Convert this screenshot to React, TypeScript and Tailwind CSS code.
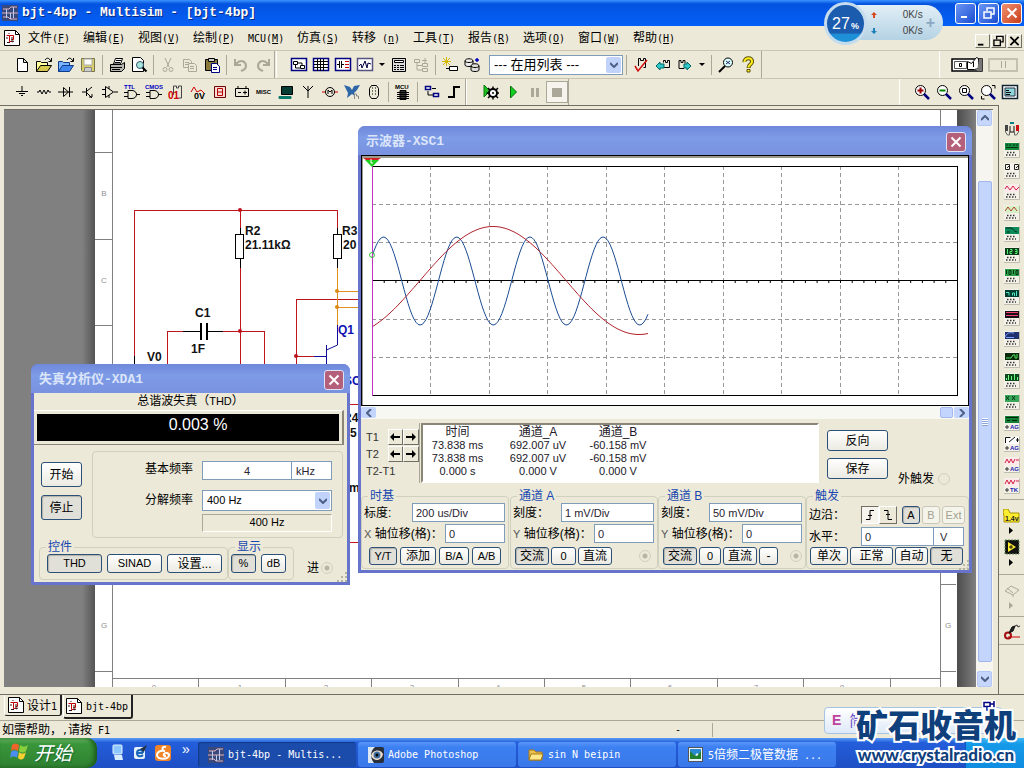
import { ReactNode, useState } from 'react';
import clsx from 'clsx';

const SANS = "font-['Liberation_Sans','Noto_Sans_CJK_SC',sans-serif]";

/* ---------- text helpers ---------- */

// half width latin next to full width han characters
function Song({ text }: { text: string }) {
  return (
    <>
      {text.split(/([\u4e00-\u9fff，]+)/).map((part, i) =>
        /[\u4e00-\u9fff]/.test(part) ? (
          <span key={i} className="font-['Noto_Sans_CJK_SC',sans-serif] text-[12px]">
            {part}
          </span>
        ) : (
          <span
            key={i}
            className="font-['DejaVu_Sans_Mono','Noto_Sans_CJK_SC',monospace] text-[10px] whitespace-pre"
          >
            {part}
          </span>
        ),
      )}
    </>
  );
}

/* ---------- icons ---------- */

type PProps = { d: string; s?: string; f?: string; w?: number };
const P = ({ d, s = '#000', f = 'none', w = 1 }: PProps) => (
  <path d={d} stroke={s} fill={f} strokeWidth={w} />
);

function T({ x, y, t, c = '#000', size = 6 }: { x: number; y: number; t: string; c?: string; size?: number }) {
  return (
    <text x={x} y={y} fill={c} fontSize={size} fontWeight="bold" fontFamily="Liberation Sans, sans-serif">
      {t}
    </text>
  );
}

const lens = (
  <>
    <circle cx="6.5" cy="6.5" r="5" fill="#fff" stroke="#000" />
    <P d="M10 10l5 5" s="#000080" w={2.5} />
  </>
);

const icons: Record<string, ReactNode> = {
  new: <P d="M3.5 1.5h6l4 4v9h-10zM9.5 1.5v4h4" f="#fff" />,
  open: (
    <>
      <P d="M.5 14.5v-10h4l1 1h6v3" f="#ffff9c" />
      <P d="M.5 14.5l4-6h11l-4 6z" f="#d6c84e" />
      <P d="M9 3c2-3 4-2 6 1M15.5 1v3.5h-3" />
    </>
  ),
  openBlue: (
    <>
      <P d="M.5 14.5v-10h4l1 1h6v3" s="#103a8a" f="#7db4ff" />
      <P d="M.5 14.5l4-6h11l-4 6z" s="#103a8a" f="#3f86ee" />
      <P d="M9 3c2-3 4-2 6 1M15.5 1v3.5h-3" />
    </>
  ),
  save: (
    <>
      <P d="M1.5 1.5h13v13h-12l-1-1z" s="#77744c" f="#d8cf6a" />
      <P d="M4 2h8v6h-8z" s="#aaa" f="#fff" />
      <P d="M4.5 10.5h7v4h-7z" s="#888" f="#ccc" />
    </>
  ),
  print: (
    <>
      <P d="M4.5 7l2-5.5h7l-2 5.5z" f="#fff" />
      <P d="M1.5 7.5h11l3-2v6l-3 3h-11z" f="#b8b8b0" />
      <P d="M1 10.5h12M3 12.5h8M7 3.5h5M6 5.5h5" />
    </>
  ),
  preview: (
    <>
      <P d="M1.5 .5h8l3 3v11h-11z" f="#fff" />
      <circle cx="9" cy="8" r="3.5" fill="#a8e6e0" stroke="#356" />
      <P d="M11.5 10.5l4 4" w={2} />
    </>
  ),
  cut: (
    <>
      <P d="M5 1l4 9M11 1l-4 9" s="#aca899" />
      <circle cx="5" cy="12.5" r="2" fill="none" stroke="#aca899" />
      <circle cx="11" cy="12.5" r="2" fill="none" stroke="#aca899" />
    </>
  ),
  copy: (
    <>
      <P d="M1.5 2.5h6l2 2v6h-8zM3 5.5h4M3 7.5h4" s="#aca899" />
      <P d="M6.5 6.5h6l2 2v6h-8zM8 9.5h4M8 11.5h4" s="#aca899" f="#ece9d8" />
    </>
  ),
  paste: (
    <>
      <P d="M1.5 2.5h12v11h-12z" f="#8a7a3c" />
      <P d="M4.5 1.5h6v3h-6z" f="#ccc" />
      <P d="M7.5 6.5h5l3 3v6h-8zM9 10.5h4M9 12.5h4" s="#000080" f="#fff" />
    </>
  ),
  undo: <P d="M2 2v6h6M3 7c5-6 10-2 10 2s-3 4-5 5" s="#aca899" w={2} />,
  redo: <P d="M14 2v6h-6M13 7c-5-6-10-2-10 2s3 4 5 5" s="#aca899" w={2} />,
  schematic: (
    <>
      <P d="M.5 1.5h15v12h-15z" s="#000080" f="#fff" w={1.5} />
      <P d="M2.5 4.5h4v3h-4zM9.5 8.5h4v3h-4zM7 6h4v2M4.5 8v3h5" />
    </>
  ),
  grid: (
    <>
      <P d="M.5 1.5h15v12h-15z" s="#000080" f="#fff" w={1.5} />
      <P d="M1 4.5h14M1 7.5h14M1 10.5h14M4.5 2v12M7.5 2v12M10.5 2v12" />
    </>
  ),
  spread: (
    <>
      <P d="M.5 1.5h15v12h-15z" s="#000080" f="#fff" w={1.5} />
      <P d="M2 7.5h2M4.5 4v7M6.5 4v7M7 7.5h2" />
      <P d="M10 4.5h4M10 7.5h4M10 10.5h4" s="#c00" />
    </>
  ),
  graph: (
    <>
      <P d="M.5 1.5h15v12h-15z" s="#555580" f="#fff" w={1.5} />
      <P d="M2 9l2-2 1 4 3-7 2 7 1-5 3 1" s="#000040" />
    </>
  ),
  calc: (
    <>
      <P d="M1.5 1.5h13v13h-13z" f="#ddd" />
      <P d="M3.5 3.5h9v2h-9z" f="#fff" />
      <P d="M3 8.5h2M6 8.5h2M9 8.5h4M3 10.5h2M6 10.5h2M9 10.5h4M3 12.5h2M6 12.5h2M9 12.5h4" />
    </>
  ),
  tree: <P d="M1.5 2.5h5v3h-5zM9.5 6.5h5v3h-5zM9.5 11.5h5v3h-5zM4 6v7h5M4 8.5h5M9 3.5h5M12 1v5" s="#aca899" />,
  wizard: (
    <>
      <P d="M4.5 0v9M0 4.5h9M1 1l7 7M8 1l-7 7" s="#d6b800" />
      <P d="M7.5 9.5h8v4h-8z" f="#fff" />
      <P d="M4 11.5h3" />
    </>
  ),
  database: (
    <>
      <P d="M1 4c0-3 8-3 8 0v4c0 2-8 2-8 0zM1 4c0 2 8 2 8 0" f="#eee" />
      <P d="M7 9c0-3 8-3 8 0v4c0 2-8 2-8 0zM7 9c0 2 8 2 8 0" f="#ddd" />
      <P d="M11 3h4M13 1v4" s="#0000c0" w={1.5} />
    </>
  ),
  erc: (
    <>
      <P d="M5.5 9v-7.5h2v2h3v-2h2v9h-2" />
      <P d="M2 9l3 5L14 3" s="#d01010" w={1.5} />
    </>
  ),
  back: (
    <>
      <P d="M8.5 5.5v-2h2v2h2v-2h2v7h-6" />
      <P d="M1 9l4-4v2h4v4h-4v2z" s="#066" f="#30c8c8" />
    </>
  ),
  forward: (
    <>
      <P d="M7 11.5h-5v-8h2v2h2v-2h2v3" />
      <P d="M14 9l-4-4v2h-3v4h3v2z" s="#066" f="#30c8c8" />
    </>
  ),
  find: (
    <>
      <circle cx="10" cy="5.5" r="4.5" fill="#dff" stroke="#000" />
      <P d="M7 9l-6 6" w={2} />
      <P d="M8 4l4 3M12 4l-4 3" s="#226" />
    </>
  ),
  help: (
    <>
      <P d="M4.500 5C4 0 13 0 12 5c0 2-3.500 2.500-3.500 6" s="#5c5200" w={4} />
      <P d="M4.500 5C4 0 13 0 12 5c0 2-3.500 2.500-3.500 5.500" s="#ffee20" w={2} />
      <P d="M7 12.500h3v2.500h-3z" s="#5c5200" f="#ffee20" />
    </>
  ),
  source: <P d="M8 2v5M2 7.5h12M5 9.5h6M7 11.5h2" />,
  resistor: <P d="M1 8h2l1-2 2 4 2-4 2 4 2-4 1 2h2" />,
  diode: <P d="M0 8h15M5.5 3.5v9l5-4.5zM11.5 3v10" />,
  transistor: <P d="M2 8h4M6.5 4v8M7 7l5-4M7 9l5 5M9 13h3v-3" />,
  opamp: <P d="M3.5 2.5v11l8-5.5zM0 5.5h3M0 10.5h3M12 8h4M7 2v3M7 11v3" />,
  ttl: (
    <>
      <T x={0} y={5} t="TTL" c="#0000c0" />
      <P d="M4 6.5h4c6 0 6 8 0 8h-4zM0 8.5h4M0 12.5h4M12 10.5h4" />
    </>
  ),
  cmos: (
    <>
      <T x={-1} y={5} t="CMOS" c="#0000c0" />
      <P d="M4 6.5h4c6 0 6 8 0 8h-4zM0 8.5h4M0 12.5h4M12 10.5h4" />
    </>
  ),
  digital: (
    <>
      <P d="M5.5 11v-9h3v2h2v-2h3v12h-3" s="#444" />
      <T x={0} y={15} t="01" c="#d00000" size={10} />
    </>
  ),
  mixed: (
    <>
      <P d="M1 8l3-5 3 5 4-2 3 3" s="#d00000" />
      <T x={4} y={15} t="0V" size={9} />
    </>
  ),
  display: (
    <>
      <P d="M2.5 2.5h11v11h-11z" s="#700" f="#f6dcd6" />
      <P d="M5.5 4.5h5v7h-5zM6 8h4" s="#b00" />
    </>
  ),
  power: <P d="M1.5 4.5h13v8h-13zM4 2v2M12 2v2M4 8.5h3M9 8.5h4M11 6.5v4" />,
  misc: <T x={0} y={10} t="MISC" size={6} />,
  pc: (
    <>
      <P d="M3.5 2.5h11v8h-11z" f="#063c34" />
      <P d="M1 12.5h12v2h-12z" s="#0a7a6a" f="#0a7a6a" />
    </>
  ),
  antenna: <P d="M3 2l5 5 5-5M8 2v12" />,
  motor: (
    <>
      <circle cx="8" cy="8" r="4.5" fill="none" stroke="#000" />
      <P d="M0 8h3M13 8h3" s="#c00" />
      <P d="M6 10v-4l2 2 2-2v4" />
    </>
  ),
  bird: (
    <>
      <P d="M0 1l6 2 2 3 2-4 6-1-3 5-3 3 1 3-3-2-5 4 1-5-2-4z" s="none" f="#2d66a8" />
      <P d="M10.500 15v-5h2v2h2v3" s="#888" />
    </>
  ),
  connector: <P d="M5.5 1.5h5l2 3v7l-2 3h-5l-2-3v-7zM6 4h1M9 4h1M6 7h1M9 7h1M6 10h1M9 10h1" />,
  mcu: (
    <>
      <T x={0} y={5} t="MCU" size={6} />
      <P d="M5 6.5h6v9h-6z" f="#333" />
      <P d="M2 8.5h12M2 10.5h12M2 12.5h12M2 14.5h12" />
    </>
  ),
  hier: (
    <>
      <P d="M1.5 2.5h5v3h-5zM9.5 9.5h5v3h-5z" s="#000080" f="#fff" w={1.5} />
      <P d="M8 4.5h4M4 7v4h5" />
    </>
  ),
  bus: <P d="M2 13h6V3h6" w={2} />,
  simset: (
    <>
      <P d="M1 1l6 6-6 6z" s="#0a7a0a" f="#20c020" />
      <circle cx="10" cy="9" r="4" fill="#fff" stroke="#000" strokeWidth="2" />
      <P d="M10 2.5v2M10 13.5v2M3.5 9h2M14.5 9h1.5M5 4l2 2M13 12l2 2M13 6l2-2M5 14l2-2" w={1.5} />
      <circle cx="10" cy="9" r="1" />
    </>
  ),
  play: <P d="M5.5 2v12l6-6z" s="#0a6a0a" f="#10d020" />,
  pause: <P d="M5.5 4v9M10.5 4v9" s="#aca899" w={3} />,
  stop: <P d="M3 4h10v9h-10z" s="none" f="#aca899" />,
  zoomIn: (
    <>
      {lens}
      <P d="M3.5 6.5h6M6.5 3.5v6" s="#900" w={2} />
    </>
  ),
  zoomOut: (
    <>
      {lens}
      <P d="M3.5 6.5h6" s="#080" w={2} />
    </>
  ),
  zoomArea: (
    <>
      {lens}
      <P d="M4.5 4.5h4v4h-4z" />
    </>
  ),
  zoomFit: (
    <>
      {lens}
      <P d="M12 1.5h3v3M1.5 12v3h3" />
    </>
  ),
  fullscreen: (
    <>
      <P d="M.5 1.5h15v13h-15z" s="#123" f="#fff" w={1.5} />
      <P d="M3 4h10v8h-10z" s="#234" f="#8fd6dc" />
      <P d="M4 6.5h3M4 8.5h5M4 10.5h4" />
    </>
  ),
  doc: (
    <>
      <P d="M.5 .5h11l4 4v11h-15z" f="#fff" />
      <P d="M11.5 .5v4h4" />
      <P d="M2.500 5.500h3v6h3M5.500 5.500h4v4h-2" s="#c00000" />
      <P d="M2 8h2M5 3v1M8 7v5l2-1M3 12.500h3" s="#301010" />
    </>
  ),
};

function Icon({ name, size = 16 }: { name: string; size?: number }) {
  return (
    <svg width={size} height={size} viewBox="0 0 16 16" className="shrink-0 overflow-visible" aria-hidden>
      {icons[name]}
    </svg>
  );
}

function AppLogo() {
  return (
    <svg width="16" height="16" viewBox="0 0 16 16" className="shrink-0" aria-hidden>
      <rect width="16" height="16" fill="#39497c" />
      <path d="M1 4h6l2-2h6M0 8h16M1 12h5l2 2h7" stroke="#e4b4bc" fill="none" />
      <path d="M4.500 4v9M8.500 8v6M11.500 2v11" stroke="#b9cdf2" />
    </svg>
  );
}

/* ---------- toolbars ---------- */

function Tool({ name, pressed }: { name: string; pressed?: boolean }) {
  return (
    <button
      type="button"
      aria-label={name}
      className={clsx(
        'flex h-[22px] w-[22px] shrink-0 items-center justify-center',
        pressed && 'border border-[#aca899] bg-[#f6f4ec]',
      )}
    >
      <Icon name={name} />
    </button>
  );
}

const Sep = () => <span className="mx-[3px] h-[20px] w-px shrink-0 bg-[#aca899]" />;
const Drop = () => (
  <button type="button" aria-label="more" className="flex h-[22px] w-[12px] items-center justify-center">
    <svg width="6" height="4" viewBox="0 0 6 4">
      <path d="M0 0h6l-3 3z" />
    </svg>
  </button>
);

function Tools({ names }: { names: string[] }) {
  return (
    <>
      {names.map((name) => (
        <Tool key={name} name={name} />
      ))}
    </>
  );
}

function Chevron({ up }: { up?: boolean }) {
  return (
    <svg width="8" height="6" viewBox="0 0 8 6" aria-hidden>
      <path d={up ? 'M0 5l4-4 4 4' : 'M0 1l4 4 4-4'} fill="none" stroke="#4d6185" strokeWidth="2" />
    </svg>
  );
}

function Select({ label, value, className }: { label: string; value: string; className: string }) {
  return (
    <div className={clsx('relative flex border border-[#7f9db9] bg-white', SANS, className)}>
      <select aria-label={label} className="w-full appearance-none bg-transparent pr-5 pl-1 outline-none">
        <option>{value}</option>
      </select>
      <span className="pointer-events-none absolute inset-y-px right-px flex w-[15px] items-center justify-center rounded-xs bg-[#c1d3fb]">
        <Chevron />
      </span>
    </div>
  );
}

const menus: [string, string, string][] = [
  ['文件', 'F', 'w-[55px]'],
  ['编辑', 'E', 'w-[55px]'],
  ['视图', 'V', 'w-[55px]'],
  ['绘制', 'P', 'w-[55px]'],
  ['MCU', 'M', 'w-[49px]'],
  ['仿真', 'S', 'w-[55px]'],
  ['转移 ', 'n', 'w-[61px]'],
  ['工具', 'T', 'w-[55px]'],
  ['报告', 'R', 'w-[55px]'],
  ['选项', 'O', 'w-[55px]'],
  ['窗口', 'W', 'w-[55px]'],
  ['帮助', 'H', 'w-[55px]'],
];

function WinButton({ label, className, children }: { label: string; className: string; children: ReactNode }) {
  return (
    <button type="button" aria-label={label} className={clsx('flex items-center justify-center', className)}>
      <svg width="12" height="12" viewBox="0 0 12 12" fill="none" stroke="currentColor" strokeWidth="2" aria-hidden>
        {children}
      </svg>
    </button>
  );
}
const minShape = <path d="M1 10h6" />;
const restoreShape = <path d="M4 4V1h7v6H8M1 5h7v6H1z" strokeWidth="1.5" />;
const closeShape = <path d="M1.5 1.5l9 9M10.5 1.5l-9 9" />;

function TitleBar() {
  const box = 'h-[21px] w-[21px] rounded-[3px] border border-white text-white';
  return (
    <header className="flex h-[26px] shrink-0 items-center bg-linear-to-b from-[#3a93ff] via-[#0453e0] via-15% to-[#0460f8] px-[2px]">
      <AppLogo />
      <h1 className="ml-1 font-['Liberation_Mono',monospace] text-[13px] font-bold text-white [text-shadow:1px_1px_#0a2a80]">
        bjt-4bp - Multisim - [bjt-4bp]
      </h1>
      <div className="ml-auto flex gap-[2px]">
        <WinButton label="最小化" className={clsx(box, 'bg-linear-to-br from-[#6b95f5] to-[#1a4bd0]')}>{minShape}</WinButton>
        <WinButton label="还原" className={clsx(box, 'bg-linear-to-br from-[#6b95f5] to-[#1a4bd0]')}>{restoreShape}</WinButton>
        <WinButton label="关闭" className={clsx(box, 'bg-linear-to-br from-[#f09070] to-[#c83a10]')}>{closeShape}</WinButton>
      </div>
    </header>
  );
}

function MenuBar() {
  const box = 'h-[14px] w-[15px] border border-t-white border-l-white border-r-[#716f64] border-b-[#716f64] p-px text-black';
  return (
    <nav className="flex h-[24px] shrink-0 items-center pl-1">
      <Icon name="doc" />
      <ul className="ml-2 flex items-center">
        {menus.map(([label, key, width]) => (
          <li key={key} className={width}>
            <button type="button" className="block text-left text-[12px] leading-[20px] whitespace-nowrap">
              <Song text={label} />
              <Song text="(" />
              <u>
                <Song text={key} />
              </u>
              <Song text=")" />
            </button>
          </li>
        ))}
      </ul>
      <div className="mt-[6px] mr-[2px] ml-auto flex gap-px">
        <WinButton label="最小化" className={box}>{minShape}</WinButton>
        <WinButton label="还原" className={box}>{restoreShape}</WinButton>
        <WinButton label="关闭" className={box}>{closeShape}</WinButton>
      </div>
    </nav>
  );
}

function StandardBar() {
  return (
    <div className="flex h-[28px] shrink-0 border-t border-[#c9c5b2]">
      <div className="flex items-center border-r border-[#aca899] pl-[11px]">
        <Tools names={['new', 'open', 'openBlue', 'save']} />
        <Sep />
        <Tools names={['print', 'preview']} />
        <Sep />
        <Tools names={['cut', 'copy', 'paste']} />
        <Sep />
        <Tools names={['undo', 'redo']} />
      </div>
      <div className="ml-px flex items-center border-r border-l border-r-[#aca899] border-l-white pr-[2px] pl-[11px]">
        <Tools names={['schematic', 'grid', 'spread', 'graph']} />
        <Drop />
        <Tools names={['calc', 'tree']} />
        <Sep />
        <Tools names={['wizard', 'database']} />
        <span className="w-[6px]" />
        <Select label="在用列表" value="--- 在用列表 ---" className="h-[20px] w-[134px] text-[13px] leading-[18px]" />
        <Sep />
        <Tools names={['erc', 'back', 'forward']} />
        <Drop />
        <Sep />
        <Tools names={['find', 'help']} />
      </div>
      <div className="ml-auto flex items-center gap-[5px] border-l border-white pr-[6px] pl-[11px]">
        <button type="button" aria-label="仿真开关">
          <svg width="32" height="17" viewBox="0 0 32 17">
            <path d="M1 3h30v12H1z" fill="#fff" stroke="#000" strokeWidth="1.5" />
            <path d="M3.500 5.500h12v7h-12z" fill="#fff" stroke="#555" />
            <path d="M16.500 5.500l4 2 5-6 2 1v10l-4 1h-7z" fill="#fff" stroke="#000" />
            <path d="M28 3h3v12h-5z" fill="#777" />
            <path d="M8.500 7.500h2v3h-2zM22.500 6v5" fill="none" stroke="#000" />
          </svg>
        </button>
        <button
          type="button"
          aria-label="暂停"
          className="flex h-[14px] w-[30px] items-center justify-center gap-[3px] border-2 border-[#c4c1b2]"
        >
          <span className="h-[7px] w-px bg-[#aca899]" />
          <span className="h-[7px] w-px bg-[#aca899]" />
        </button>
      </div>
    </div>
  );
}

function ComponentBar() {
  return (
    <div className="flex h-[27px] shrink-0 border-t border-[#c9c5b2]">
      <div className="flex items-center border-r border-[#aca899] pl-[11px]">
        <Tools
          names={['source', 'resistor', 'diode', 'transistor', 'opamp', 'ttl', 'cmos', 'digital', 'mixed', 'display', 'power', 'misc', 'pc', 'antenna', 'motor', 'bird', 'connector']}
        />
        <Sep />
        <Tools names={['mcu']} />
        <Sep />
        <Tools names={['hier', 'bus']} />
      </div>
      <div className="flex items-center border-r border-l border-r-[#aca899] border-l-white pl-[13px]">
        <Tools names={['simset', 'play', 'pause']} />
        <Tool name="stop" pressed />
      </div>
      <div className="ml-auto flex items-center border-l border-white pr-[3px] pl-[11px]">
        <Tools names={['zoomIn', 'zoomOut', 'zoomArea', 'zoomFit', 'fullscreen']} />
      </div>
    </div>
  );
}

/* ---------- schematic sheet ---------- */

function Sheet() {
  const label = { fontFamily: 'Liberation Sans, sans-serif', fontWeight: 'bold', fontSize: 12 };
  return (
    <svg width="861" height="577" viewBox="95 110 861 577" className="block" fill="none">
      <g stroke="#808080" shapeRendering="crispEdges">
        <path d="M112.5 110v568.5h828V110" />
        <path d="M95 152.5h17M95 239.5h17M95 325.5h17M95 671.5h17M940 671.5h16M940 584.5h16M95 584.5h17" />
        <path d="M112.5 678v9M198.5 678v9M285.5 678v9M371.5 678v9M458.5 678v9M544.5 678v9M630.5 678v9M717.5 678v9M803.5 678v9M890.5 678v9M940.5 678v9" />
      </g>
      <g fill="#909090" fontSize="8" fontFamily="Liberation Sans, sans-serif" textAnchor="middle">
        <text x="104" y="196">B</text>
        <text x="104" y="283">C</text>
        <text x="104" y="628">G</text>
        <text x="948" y="628">G</text>
        {['0', '1', '2', '3', '4', '5', '6', '7', '8'].map((n, i) => (
          <text key={n} x={154 + i * 86} y="690">
            {n}
          </text>
        ))}
      </g>
      <g stroke="#c0141c" shapeRendering="crispEdges">
        <path d="M134.5 358V210.5H337.5V228M240.5 210v18M240.5 268V380M167.5 380V331.5h16M222 331.5h42.5V380M296.5 380V299.5H360M296 356.5h18M345 404.5h15M345 542.5h15" />
      </g>
      <path d="M337.5 268v60M337 291.5h23M337 307.5h23" stroke="#e09020" shapeRendering="crispEdges" />
      <g stroke="#000" shapeRendering="crispEdges">
        <path d="M240.5 228v40M337.5 228v40M183 331.5h17M207 331.5h16M134.5 356v24" />
        <path d="M201 323v17M207 323v17" strokeWidth="2" />
        <path d="M235.5 234.5h8v24h-8zM333.5 234.5h8v24h-8z" fill="#fff" />
      </g>
      <path d="M337.5 325v20l-11 5M326.5 345v35M314 356.5h12" stroke="#10109c" />
      <g fill="#c0141c">
        <circle cx="240" cy="210" r="2" />
        <circle cx="240" cy="331" r="2" />
        <circle cx="296" cy="356" r="2" />
      </g>
      <g fill="#e08810">
        <circle cx="337" cy="291" r="2" />
        <circle cx="337" cy="307" r="2" />
      </g>
      <g fill="#111" {...label}>
        <text x="245" y="235">R2</text>
        <text x="245" y="249">21.11kΩ</text>
        <text x="342" y="235">R3</text>
        <text x="343" y="249">20</text>
        <text x="195" y="317">C1</text>
        <text x="191" y="353">1F</text>
        <text x="147" y="361">V0</text>
        <text x="343" y="422">R4</text>
        <text x="350" y="437">5</text>
        <text x="349" y="492">m</text>
      </g>
      <g fill="#1010b0" {...label}>
        <text x="338" y="334">Q1</text>
        <text x="344" y="385">SC</text>
      </g>
    </svg>
  );
}

function ScrollButton({ up }: { up?: boolean }) {
  return (
    <button
      type="button"
      aria-label={up ? '向上' : '向下'}
      className="flex h-[16px] w-[15px] items-center justify-center rounded-xs border border-[#b4c8f6] bg-[#c6d6fc]"
    >
      <Chevron up={up} />
    </button>
  );
}

function VScroll() {
  return (
    <div className="flex w-[17px] shrink-0 flex-col items-center bg-[#f6f5ef]">
      <ScrollButton up />
      <div className="flex w-full flex-1 flex-col items-center pt-[55px] pb-[9px]">
        <div className="flex w-[14px] flex-1 flex-col items-center justify-center gap-px rounded-xs border border-[#9fb5ec] bg-[#c3d4fd]">
          {[0, 1, 2, 3].map((i) => (
            <span key={i} className="h-px w-[6px] bg-white shadow-[0_1px_#8ca4e0]" />
          ))}
        </div>
      </div>
      <ScrollButton />
    </div>
  );
}

/* ---------- instrument column ---------- */

type Instrument = { id: string; bg: string; fg: string; wave: string; tag?: string };
const instruments: Instrument[] = [
  { id: 'distortion', bg: '#128a3c', fg: '#05301a', wave: 'M2 3h2M5 3h2M9 3h2M12 3h2M2 5.5h12' },
  { id: 'wattmeter', bg: '#f6f4ec', fg: '#222', wave: 'M1.5 1.500h4v5h-4zM10.500 1.500h4v5h-4zM3 5l2-2M12 5l2-2' },
  { id: 'scope', bg: '#ffe8ec', fg: '#d02040', wave: 'M1 5l2-3 3 4 3-4 3 4 3-3' },
  { id: 'scope4', bg: '#d8f0c8', fg: '#b04020', wave: 'M1 6l3-4 3 4 3-4 3 4' },
  { id: 'bode', bg: '#0c8a5a', fg: '#042c1c', wave: 'M2 2h5c2 0 3 4 6 4M3 6h3' },
  { id: 'counter', bg: '#0a3a18', fg: '#50f070', wave: 'M3.5 2v5M6 2.5h2v2h-2v2h2M11 2.5h2v4h-2M11 4.500h2' },
  { id: 'wordgen', bg: '#28a048', fg: '#053010', wave: 'M2.5 2v4M5 2.500h2v4h-2zM9.5 2v4M12 2.500h2v4h-2z' },
  { id: 'converter', bg: '#063c30', fg: '#50e8c0', wave: 'M2 3.5h3v3M8.500 6.5V4h2v3M12.500 2v5' },
  { id: 'analyzer', bg: '#181018', fg: '#f04070', wave: 'M2 2.500h12M2 5.500h12' },
  { id: 'iv', bg: '#20306c', fg: '#80a0ff', wave: 'M1 6c3-6 6-4 9-4M2 6.500h8' },
  { id: 'spectrum', bg: '#082808', fg: '#50e060', wave: 'M2 6h5l2-3h2v3h2v-4' },
  { id: 'network', bg: '#0a4a1c', fg: '#70ff80', wave: 'M2.5 7V5M4.5 7V2M7.5 7V3M10.5 7V1M13.5 7V4' },
  { id: 'generator', bg: '#38a858', fg: '#06381a', wave: 'M2 2l3 4M5 2l-3 4M8 2l3 4M11 2l-3 4' },
  { id: 'agilent-meter', bg: '#128034', fg: '#04240c', wave: 'M2 2.5h12M3 5.5h3M8 5.5h5', tag: 'AG' },
  { id: 'agilent-gen', bg: '#fff', fg: '#111', wave: 'M1.5 7V1.500h5M5 6l6-5M12 4h3M13.500 2v4', tag: 'AG' },
  { id: 'agilent-scope', bg: '#ffe8ec', fg: '#d02040', wave: 'M1 6l2-4 2 4 2-4 2 4 2-4M12 3h3', tag: 'AG' },
  { id: 'tek-scope', bg: '#ffe8ec', fg: '#d02040', wave: 'M1 6l2-4 2 4 2-4 2 4 2-4M12 3h3', tag: 'TK' },
];

function InstrumentIcon({ bg, fg, wave, tag }: Instrument) {
  return (
    <svg width="16" height="16" viewBox="0 0 16 16" aria-hidden>
      <rect width="16" height="16" fill="#f4f2e8" />
      <path d="M0 15.5h15.5v-15" fill="none" stroke="#c0bcae" />
      <rect x="1" y="1" width="14" height="7" fill={bg} />
      <path d={wave} stroke={fg} fill="none" />
      {tag ? (
        <T x={6} y={14} t={tag} c="#2020b0" size={6} />
      ) : (
        <path d="M3 10.5h9M2 13h10" stroke="#333" strokeWidth="1.5" strokeDasharray="1.500 1.500" />
      )}
      {tag && <path d="M1 12h4M3 10v4" stroke="#333" />}
    </svg>
  );
}

const SideDrop = ({ dim }: { dim?: boolean }) => (
  <svg width="5" height="14" viewBox="0 0 5 14" aria-hidden>
    <path d="M0 3l4 3.5-4 3.5z" fill={dim ? '#aca899' : '#000'} />
  </svg>
);

function InstrumentBar() {
  return (
    <aside className="flex w-[26px] shrink-0 flex-col items-center border-l border-[#716f64] pt-[13px]">
      <button type="button" aria-label="multimeter" className="flex h-[21px] items-center">
        <svg width="16" height="14" viewBox="0 0 16 14">
          <path d="M1.500 4v6l2 3h2v-3M14.500 4v6l-2 3h-2v-3" fill="none" stroke="#666" />
          <path d="M13.500 3v6" stroke="#d01010" strokeWidth="3" />
          <path d="M2.500 3v6" stroke="#444" strokeWidth="3" />
          <path d="M6 4v6h4V4" fill="none" stroke="#111" />
          <path d="M6 1h4" stroke="#0a8080" strokeWidth="2" />
        </svg>
      </button>
      {instruments.map((item) => (
        <button key={item.id} type="button" aria-label={item.id} className="flex h-[21px] items-center">
          <InstrumentIcon {...item} />
        </button>
      ))}
      <span className="mt-[3px] h-px w-full bg-[#aca899]" />
      <button type="button" aria-label="probe" className="mt-2 flex h-[16px] items-center">
        <svg width="17" height="14" viewBox="0 0 17 14">
          <path d="M1 0h4l2 4h9v9H1V7L0 3z" fill="#ffee30" stroke="#a89400" />
          <T x={2} y={12} t="1.4v" c="#222" size={7} />
        </svg>
      </button>
      <SideDrop />
      <button type="button" aria-label="labview" className="flex h-[18px] items-center">
        <svg width="16" height="16" viewBox="0 0 16 16">
          <rect x="1" y="1" width="14" height="14" fill="#111" stroke="#6a8a5a" strokeDasharray="2 1" />
          <path d="M4 3v10l8-5z" fill="#ffee30" />
          <path d="M5 8h4M7 6v4" stroke="#111" />
        </svg>
      </button>
      <SideDrop />
      <span className="mt-1 h-px w-full bg-[#aca899]" />
      <button type="button" aria-label="export" className="mt-2 flex h-[16px] items-center">
        <svg width="16" height="12" viewBox="0 0 16 12">
          <path d="M1 6l6-5 8 4-6 5zM3 3l6 5M9 10v2" fill="none" stroke="#aca899" />
        </svg>
      </button>
      <SideDrop dim />
      <span className="mt-[3px] h-px w-full bg-[#aca899]" />
      <button type="button" aria-label="current probe" className="mt-[6px] flex h-[18px] items-center">
        <svg width="16" height="16" viewBox="0 0 16 16">
          <circle cx="4" cy="11.5" r="3" fill="none" stroke="#a01010" strokeWidth="2" />
          <path d="M4 13h12" stroke="#c00" />
          <path d="M5 9l3-6 3-1-2 5z" fill="#222" stroke="#111" />
          <path d="M11 2l2-1 1 2 2-1" stroke="#333" fill="none" />
        </svg>
      </button>
      <span className="mt-[3px] h-px w-full bg-[#aca899]" />
    </aside>
  );
}

/* ---------- dialog controls ---------- */

type BtnProps = { children: ReactNode; className?: string; on?: boolean; disabled?: boolean };
function Btn({ children, className = 'h-[19px]', on, disabled }: BtnProps) {
  return (
    <button
      type="button"
      disabled={disabled}
      className={clsx(
        'flex shrink-0 items-center justify-center rounded-[3px] border leading-none whitespace-nowrap',
        disabled
          ? 'border-[#c9c7ba] bg-[#f5f4ea] text-[#a1a192]'
          : clsx('border-[#2c5078]', on ? 'bg-[#e0dfd8] shadow-[inset_1px_1px_1px_#b5b3a8]' : 'bg-linear-to-b from-white to-[#ebeae2]'),
        className,
      )}
    >
      {children}
    </button>
  );
}

function Field({ id, value, className }: { id: string; value: string; className: string }) {
  const [text, setText] = useState(value);
  return (
    <input
      id={id}
      aria-label={id}
      value={text}
      onChange={(e) => setText(e.target.value)}
      className={clsx('h-[19px] min-w-0 border border-[#7f9db9] bg-white text-[11px] text-[#2a2430] outline-none', className)}
    />
  );
}

function Dot({ label, empty }: { label: string; empty?: boolean }) {
  return (
    <input
      type="radio"
      aria-label={label}
      disabled
      className={clsx(
        'h-[12px] w-[12px] shrink-0 appearance-none rounded-full border border-[#d2cfc0]',
        !empty && 'bg-[radial-gradient(#b8b5a6_0_2px,transparent_3px)]',
      )}
    />
  );
}

function DialogFrame({ title, className, children }: { title: string; className: string; children: ReactNode }) {
  return (
    <section
      className={clsx(
        'absolute flex flex-col rounded-t-[7px] bg-[#6674cc] px-[3px] pb-[3px] text-[12px] text-black',
        SANS,
        className,
      )}
    >
      <div className="-mx-[3px] flex h-[29px] shrink-0 items-center justify-between rounded-t-[7px] bg-linear-to-b from-[#7088dc] via-[#7d9be6] via-40% to-[#7a92e0] pt-[2px] pr-[6px] pl-2">
        <h2 className="font-['Liberation_Mono','Noto_Sans_CJK_SC',monospace] text-[13px] font-bold text-[#dbe5fa]">
          {title}
        </h2>
        <WinButton label="关闭" className="h-[20px] w-[20px] rounded-[3px] border border-[#dfe3f6] bg-[#b5607a] text-white">
          {closeShape}
        </WinButton>
      </div>
      <div className="relative flex flex-1 flex-col bg-[#ece9d8]">{children}</div>
    </section>
  );
}

const Grip = () => (
  <svg width="10" height="10" viewBox="0 0 10 10" className="absolute right-0 bottom-0" aria-hidden>
    <path d="M8 1h2M8 5h2M4 5h2M8 9h2M4 9h2M0 9h2" stroke="#b8b4a2" strokeWidth="2" />
  </svg>
);

function Group({ title, className, children }: { title: string; className: string; children: ReactNode }) {
  return (
    <fieldset className={clsx('min-w-0 rounded-[4px] border border-[#d0d0bf]', className)}>
      <legend className="ml-[6px] px-[2px] leading-[14px] text-[#1848b0]">{title}</legend>
      {children}
    </fieldset>
  );
}

/* ---------- distortion analyzer ---------- */

function DistortionAnalyzer() {
  return (
    <DialogFrame title="失真分析仪-XDA1" className="top-[364px] left-[31px] h-[221px] w-[319px]">
      <p className="text-center leading-[17px]">
        总谐波失真（<span className="text-[11px]">THD</span>）
      </p>
      <div className="mr-[3px] border-t border-r-2 border-b border-t-white border-r-[#8a8778] border-b-[#8a8778] p-[3px]">
        <output className="block h-[27px] bg-black pl-[20px] text-center text-[16px] leading-[21px] text-white">
          0.003 %
        </output>
      </div>
      <div className="mt-[6px] flex pl-[7px]">
        <div className="flex flex-col gap-2 pt-[11px]">
          <Btn className="h-[25px] w-[41px]">开始</Btn>
          <Btn on className="h-[25px] w-[41px]">停止</Btn>
        </div>
        <div className="mr-[4px] ml-[10px] flex h-[87px] flex-1 flex-col rounded-[4px] border border-[#d0d0bf] pt-[9px] pr-[10px]">
          <div className="flex justify-end">
            <label htmlFor="基本频率" className="mr-[9px] leading-[16px]">基本频率</label>
            <Field id="基本频率" value="4" className="w-[90px] text-center" />
            <Field id="频率单位" value="kHz" className="-ml-px w-[41px] px-1" />
          </div>
          <div className="mt-[10px] flex justify-end">
            <span className="mr-[9px] leading-[20px]">分解频率</span>
            <Select label="分解频率" value="400 Hz" className="h-[21px] w-[130px] text-[11px]" />
          </div>
          <output className="mt-[3px] ml-auto h-[18px] w-[130px] border border-t-[#aca899] border-r-white border-b-white border-l-[#aca899] text-center text-[11px] leading-[14px]">
            400 Hz
          </output>
        </div>
      </div>
      <div className="mt-[2px] flex items-start pl-[5px]">
        <Group title="控件" className="w-[189px]">
          <div className="flex gap-[5px] px-[7px] pb-[6px] text-[11px]">
            <Btn on className="h-[19px] w-[55px]">THD</Btn>
            <Btn className="h-[19px] w-[55px]">SINAD</Btn>
            <Btn className="h-[19px] w-[55px] text-[12px]">设置...</Btn>
          </div>
        </Group>
        <Group title="显示" className="w-[66px]">
          <div className="flex gap-[5px] px-[2px] pb-[6px] text-[11px]">
            <Btn on className="h-[19px] w-[25px]">%</Btn>
            <Btn className="h-[19px] w-[25px]">dB</Btn>
          </div>
        </Group>
        <label className="mt-[19px] ml-[13px] flex items-center gap-[2px]">
          进
          <Dot label="进" />
        </label>
      </div>
      <Grip />
    </DialogFrame>
  );
}

/* ---------- oscilloscope ---------- */

const wave = (center: number, amp: number, peak: number, period: number) =>
  Array.from({ length: 139 }, (_, i) => {
    const x = i * 2;
    const y = center - amp * Math.cos((2 * Math.PI * (x - peak)) / period);
    return `${x},${y.toFixed(1)}`;
  }).join(' ');

function ScopeScreen() {
  return (
    <div className="h-[251px] border border-black bg-white">
      <div className="h-full border-t-2 border-l border-[#9c9a8c]">
        <svg width="604" height="247" viewBox="-9 -8 604 247" className="block" fill="none">
          <g stroke="#999" strokeDasharray="4 3" shapeRendering="crispEdges">
            {[1, 2, 3, 4, 5, 6, 7, 8, 9].map((i) => (
              <path key={i} d={`M${Math.floor(i * 58.5)}.5 0V229`} />
            ))}
            {[38, 76, 153, 191].map((y) => (
              <path key={y} d={`M0 ${y}.5H585`} />
            ))}
          </g>
          <path d="M0 .5H585.5V229.5H0M0 114.5H585" stroke="#000" shapeRendering="crispEdges" />
          <path d="M0 116H585" stroke="#000" strokeWidth="2" strokeDasharray="1 10.7" />
          <polyline points={wave(115, 44, 11.5, 73.2)} stroke="#1c4c94" />
          <polyline points={wave(114.5, 54, 121, 292)} stroke="#b0242c" />
          <path d="M.5 0V230" stroke="#c030c0" shapeRendering="crispEdges" />
          <path d="M-9-8H9L6-6H-6z" fill="#d02020" />
          <path d="M-7-6H7L0 1z" fill="#20d020" />
          <path d="M-1-7v4h2" stroke="#fff" />
          <circle cx="0" cy="89" r="2.5" stroke="#40c040" />
        </svg>
      </div>
    </div>
  );
}

const readings = [
  ['73.838 ms', '692.007 uV', '-60.158 mV'],
  ['73.838 ms', '692.007 uV', '-60.158 mV'],
  ['0.000 s', '0.000 V', '0.000 V'],
];

const arrow = 'flex h-[16px] w-[16px] items-center justify-center border border-t-white border-l-white border-r-[#716f64] border-b-[#716f64]';
function ArrowPair({ name }: { name: string }) {
  return (
    <div className="flex items-center">
      <span className="w-[22px] text-[11px] text-[#333]">{name}</span>
      <button type="button" aria-label={`${name} 左移`} className={arrow}>
        <svg width="10" height="8" viewBox="0 0 10 8"><path d="M0 4l4-4v3h6v2H4v3z" /></svg>
      </button>
      <button type="button" aria-label={`${name} 右移`} className={arrow}>
        <svg width="10" height="8" viewBox="0 0 10 8"><path d="M10 4L6 0v3H0v2h6v3z" /></svg>
      </button>
    </div>
  );
}

function AxisGroup({ title, scaleLabel, scale, axis, gap, className, children }: {
  title: string;
  scaleLabel: string;
  scale: string;
  axis: string;
  gap: string;
  className: string;
  children: ReactNode;
}) {
  return (
    <Group title={title} className={className}>
      <div className="flex items-center justify-between pr-[3px] pl-[2px]">
        <label htmlFor={`${title} 刻度`}>{scaleLabel}</label>
        <Field id={`${title} 刻度`} value={scale} className="w-[93px] px-[3px]" />
      </div>
      <div className="mt-[2px] flex items-center justify-between pr-[3px] pl-[2px]">
        <label htmlFor={`${title} 位移`} className="whitespace-nowrap">
          <span className="text-[11px] text-[#555]">{axis}</span> 轴位移(格)：
        </label>
        <Field id={`${title} 位移`} value="0" className="w-[60px] px-[3px]" />
      </div>
      <div className={clsx('mt-[4px] flex items-center', gap)}>{children}</div>
    </Group>
  );
}

function EdgeIcon({ d }: { d: string }) {
  return (
    <svg width="12" height="12" viewBox="0 0 12 12" aria-hidden>
      <path d={d} fill="none" stroke="#000" />
    </svg>
  );
}

function Oscilloscope() {
  return (
    <DialogFrame title="示波器-XSC1" className="top-[126px] left-[358px] h-[447px] w-[614px]">
      <ScopeScreen />
      <div className="flex h-[13px] items-center justify-between bg-[#f8f8f2]">
        <button type="button" aria-label="向左" className="flex h-[11px] w-[15px] items-center justify-center rounded-xs bg-[#c3d4fd]">
          <svg width="6" height="8" viewBox="0 0 6 8"><path d="M5 0L1 4l4 4" fill="none" stroke="#4d6185" strokeWidth="2" /></svg>
        </button>
        <span className="ml-auto h-[11px] w-[13px] rounded-xs border border-[#a4b9f0] bg-[#c3d4fd]" />
        <button type="button" aria-label="向右" className="ml-px flex h-[11px] w-[15px] items-center justify-center rounded-xs bg-[#c3d4fd]">
          <svg width="6" height="8" viewBox="0 0 6 8"><path d="M1 0l4 4-4 4" fill="none" stroke="#4d6185" strokeWidth="2" /></svg>
        </button>
      </div>
      <div className="mt-1 flex h-[60px]">
        <div className="w-[59px] border-r border-[#aca899] pt-[6px] pl-[5px]">
          <ArrowPair name="T1" />
          <ArrowPair name="T2" />
          <p className="text-[11px] leading-[18px] text-[#333]">T2-T1</p>
        </div>
        <div className="ml-px w-[398px] border-2 border-[#8a8778] border-r-white border-b-white bg-white pt-px">
          <table className="text-center text-[11px] leading-[13px] text-[#221828]">
            <thead className="text-[12px]">
              <tr>
                <th className="w-[69px] p-0 font-normal">时间</th>
                <th className="w-[92px] p-0 font-normal">通道_A</th>
                <th className="w-[68px] p-0 font-normal">通道_B</th>
              </tr>
            </thead>
            <tbody>
              {readings.map((row, i) => (
                <tr key={i}>
                  {row.map((cell, j) => (
                    <td key={j} className="p-0 whitespace-nowrap">{cell}</td>
                  ))}
                </tr>
              ))}
            </tbody>
          </table>
        </div>
        <div className="ml-[8px] flex flex-col gap-[7px] pt-[7px]">
          <Btn className="h-[21px] w-[61px]">反向</Btn>
          <Btn className="h-[21px] w-[61px]">保存</Btn>
        </div>
        <label className="-mb-[3px] ml-[10px] flex items-center gap-1 self-end leading-[14px]">
          外触发
          <Dot label="外触发" empty />
        </label>
      </div>
      <div className="mt-[6px] flex flex-1 pb-px">
        <AxisGroup title="时基" scaleLabel="标度:" scale="200 us/Div" axis="X" gap="gap-[3px] pl-[7px]" className="w-[148px]">
          <Btn on className="h-[18px] w-[28px] text-[11px]">Y/T</Btn>
          <Btn className="h-[18px] w-[36px]">添加</Btn>
          <Btn className="h-[18px] w-[30px] text-[11px]">B/A</Btn>
          <Btn className="h-[18px] w-[29px] text-[11px]">A/B</Btn>
        </AxisGroup>
        <AxisGroup title="通道 A" scaleLabel="刻度：" scale="1 mV/Div" axis="Y" gap="gap-[2px] pl-[4px]" className="ml-px w-[148px]">
          <Btn on className="h-[18px] w-[34px]">交流</Btn>
          <Btn className="h-[18px] w-[25px] text-[11px]">0</Btn>
          <Btn className="h-[18px] w-[34px]">直流</Btn>
          <span className="mr-[6px] ml-auto flex">
            <Dot label="通道 A" />
          </span>
        </AxisGroup>
        <AxisGroup title="通道 B" scaleLabel="刻度：" scale="50 mV/Div" axis="Y" gap="gap-[2px] pl-[4px]" className="w-[148px]">
          <Btn on className="h-[18px] w-[34px]">交流</Btn>
          <Btn className="h-[18px] w-[22px] text-[11px]">0</Btn>
          <Btn className="h-[18px] w-[34px]">直流</Btn>
          <Btn className="h-[18px] w-[19px]">-</Btn>
          <span className="mr-[3px] ml-auto flex">
            <Dot label="通道 B" />
          </span>
        </AxisGroup>
        <Group title="触发" className="flex-1">
          <div className="flex h-[24px] items-center pr-[3px] pl-[2px]">
            <span className="w-[52px]">边沿：</span>
            <button type="button" aria-label="上升沿" className="flex h-[18px] w-[18px] items-center justify-center border border-[#716f64] border-r-white border-b-white bg-[#f6f4ec]">
              <EdgeIcon d="M2 10.5h4v-9h4M4 6.5h4" />
            </button>
            <button type="button" aria-label="下降沿" className="flex h-[18px] w-[18px] items-center justify-center border border-white border-r-[#716f64] border-b-[#716f64]">
              <EdgeIcon d="M2 1.5h4v9h4M4 5.5h4" />
            </button>
            <div className="ml-auto flex gap-[2px] text-[11px]">
              <Btn on className="h-[18px] w-[18px]">A</Btn>
              <Btn disabled className="h-[18px] w-[18px]">B</Btn>
              <Btn disabled className="h-[18px] w-[23px]">Ext</Btn>
            </div>
          </div>
          <div className="flex items-center pl-[2px]">
            <label htmlFor="触发电平" className="w-[52px]">水平：</label>
            <Field id="触发电平" value="0" className="w-[73px] px-[3px]" />
            <Field id="电平单位" value="V" className="-ml-px w-[31px] px-[6px]" />
          </div>
          <div className="mt-px flex gap-[2px] pl-[3px]">
            <Btn className="h-[18px] w-[38px]">单次</Btn>
            <Btn className="h-[18px] w-[43px]">正常</Btn>
            <Btn className="h-[18px] w-[33px]">自动</Btn>
            <Btn on className="h-[18px] w-[33px]">无</Btn>
          </div>
        </Group>
      </div>
      <Grip />
    </DialogFrame>
  );
}

/* ---------- bottom of the screen ---------- */

function SheetTabs() {
  return (
    <div className="flex h-[26px] shrink-0 items-start border-t border-[#716f64] pl-1 text-[12px] whitespace-nowrap" role="tablist">
      <button type="button" role="tab" className="flex h-[21px] w-[58px] items-center rounded-b-[3px] border-r-2 border-b border-l border-[#222] border-l-white pl-[3px]">
        <Icon name="doc" />
        <span className="ml-[3px]">
          <Song text="设计1" />
        </span>
      </button>
      <button type="button" role="tab" aria-selected className="ml-px flex h-[24px] w-[70px] items-center rounded-b-[3px] border-r-2 border-b-2 border-l border-[#222] border-l-white pl-[2px]">
        <Icon name="doc" />
        <span className="ml-1">
          <Song text="bjt-4bp" />
        </span>
      </button>
    </div>
  );
}

function StatusBar() {
  return (
    <footer className="flex h-[18px] shrink-0 items-center border-t border-[#aca899] pl-[2px] text-[12px] leading-[16px]">
      <p className="flex-1">
        <Song text="如需帮助，,请按 F1" />
      </p>
      <p className="flex w-[349px] items-center">
        <Song text="-" />
        <span className="ml-[31px] h-[14px] w-px bg-[#aca899]" />
      </p>
    </footer>
  );
}

const tasks: { title: string; icon: ReactNode; active?: boolean }[] = [
  { title: 'bjt-4bp - Multis...', icon: <AppLogo />, active: true },
  {
    title: 'Adobe Photoshop',
    icon: (
      <svg width="16" height="16" viewBox="0 0 16 16">
        <rect width="16" height="16" rx="2" fill="#2a2f3c" />
        <path d="M0 0h7C2 4 2 11 6 16H0z" fill="#dce8f4" />
        <path d="M3 9c1-6 9-8 12-2-1 6-8 9-12 2z" fill="#f2dfcf" />
        <circle cx="9" cy="8" r="3.5" fill="#3c6ea0" />
        <circle cx="9" cy="8" r="1.5" />
      </svg>
    ),
  },
  {
    title: 'sin N beipin',
    icon: (
      <svg width="16" height="16" viewBox="0 0 16 16">
        <path d="M1 3h5l2 2h6v8H1z" fill="#e8c04c" stroke="#a87a18" />
        <path d="M3 7h12l-2 6H1z" fill="#ffe88c" stroke="#a87a18" />
      </svg>
    ),
  },
  {
    title: '5倍频二极管数据 ...',
    icon: (
      <svg width="16" height="16" viewBox="0 0 16 16">
        <rect x=".5" y=".5" width="14" height="14" fill="#e8f4ff" stroke="#555" />
        <path d="M2 2h11v7L9 6l-4 5-3-3z" fill="#2a8ad0" />
        <path d="M2 4l4 4 3 1 4-5v8H2z" fill="#208030" />
      </svg>
    ),
  },
];

function TaskBar() {
  return (
    <div className="flex h-[30px] shrink-0 items-center bg-linear-to-b from-[#5a9cf4] via-[#245edb] via-15% to-[#1e4fc4]">
      <button
        type="button"
        className="flex h-full w-[97px] items-center gap-1 rounded-r-[10px] bg-linear-to-b from-[#68b868] via-[#3a963a] via-20% to-[#2e8030] pb-[3px] pl-[10px] font-['Noto_Sans_CJK_SC',sans-serif] text-[19px] leading-[24px] text-white italic shadow-[inset_-3px_0_4px_#1c5c1c] [text-shadow:1px_1px_1px_#163]"
      >
        <svg width="20" height="19" viewBox="0 0 20 19" aria-hidden>
          <path d="M2 3c3-2 5-2 7 0L8 9C6 7 4 7 1 9z" fill="#f0642c" />
          <path d="M10 3c3 2 5 2 8 0l-2 6c-2 2-5 2-7 0z" fill="#8ad03c" />
          <path d="M1 10c2-2 5-2 7 0l-1 6c-2-2-5-2-7 0z" fill="#4a8cf0" />
          <path d="M9 10c2 2 5 2 7 0l-2 6c-2 2-4 2-6 0z" fill="#f8d030" />
        </svg>
        开始
      </button>
      <div className="ml-[11px] flex w-[90px] items-center gap-[5px]">
        <svg width="18" height="18" viewBox="0 0 18 18" aria-label="显示桌面">
          <rect x="5" y="1" width="9" height="9" rx="1" fill="#8cc8ff" stroke="#e4f2ff" />
          <path d="M6 11h8l1 5H7z" fill="#d8ecff" />
        </svg>
        <svg width="18" height="18" viewBox="0 0 18 18" aria-label="浏览器">
          <rect x="3" y="3" width="11" height="12" rx="2" fill="#e8f2fc" />
          <path d="M12 9H6c0-4 6-4 6 0M6 9c0 4 4 4 6 2" fill="none" stroke="#1c68b8" strokeWidth="2" />
          <path d="M9 5l7-4-3 7z" fill="#234" />
        </svg>
        <svg width="18" height="18" viewBox="0 0 18 18" aria-label="UC">
          <rect x="1" y="1" width="16" height="16" rx="3" fill="#f28428" />
          <path d="M12 3c-5-1-4 4-1 4-6-1-8 2-8 4 0 5 12 5 12 0 0-2-4-3-5-1s1 2 2 2" fill="none" stroke="#fff" strokeWidth="2" />
        </svg>
        <span className="mb-2 ml-[5px] font-['Liberation_Sans',sans-serif] text-[14px] leading-none text-white">»</span>
      </div>
      <div className="flex min-w-0 flex-1 gap-[2px]">
        {tasks.map(({ title, icon, active }) => (
          <button
            key={title}
            type="button"
            className={clsx(
              'mt-[3px] flex h-[25px] w-[158px] items-center gap-1 rounded-[3px] pl-[10px] text-[12px] leading-[16px] text-white',
              active ? 'bg-[#1b4cab] shadow-[inset_1px_1px_1px_#123a88]' : 'bg-linear-to-b from-[#5b96f8] via-[#3c80f2] via-20% to-[#3a78e8]',
            )}
          >
            {icon}
            <span className="whitespace-nowrap">
              <Song text={title} />
            </span>
          </button>
        ))}
      </div>
      <div className="h-full w-[59px] border-l border-[#0c58c0] bg-linear-to-b from-[#3cb8f8] via-[#149ae8] via-20% to-[#108ce0]" />
    </div>
  );
}

/* ---------- floating widgets ---------- */

function SpeedBall() {
  return (
    <div className={clsx('absolute top-[2px] right-[81px] flex items-center', SANS)}>
      <div className="z-10 flex h-[43px] w-[43px] items-center justify-center gap-px rounded-full border-3 border-[#c4dced] bg-linear-to-b from-[#1c5cae] from-75% to-[#1e90d8] to-80% text-white">
        <span className="text-[16px]">27</span>
        <span className="mt-[7px] text-[9px] font-bold">%</span>
      </div>
      <div className="mb-[2px] -ml-[22px] flex h-[35px] w-[98px] items-center rounded-r-full bg-linear-to-b from-[#e2eff6] to-[#b4d2e4] pr-[8px] pl-[25px] text-[10px] text-[#444]">
        <svg width="8" height="24" viewBox="0 0 8 24" aria-hidden>
          <path d="M4 1l3 3H5v3H3V4H1z" fill="#d84820" />
          <path d="M4 23l3-3H5v-3H3v3H1z" fill="#2080b8" />
        </svg>
        <div className="ml-auto flex flex-col leading-[16px]">
          <span>0K/s</span>
          <span>0K/s</span>
        </div>
        <span className="ml-[3px] text-[16px] leading-none font-bold text-[#8aa8c4]">+</span>
      </div>
    </div>
  );
}

function LanguageBar() {
  return (
    <div className="absolute right-[22px] bottom-[34px] flex h-[27px] w-[178px] items-center gap-2 rounded-[4px] border border-[#a4c4e4] bg-linear-to-b from-white to-[#dfe9f8] pl-[7px]">
      <span className="font-['Liberation_Sans',sans-serif] text-[14px] font-bold text-[#c0409c]">E</span>
      <span className="font-['Noto_Sans_CJK_SC',sans-serif] text-[15px] text-[#7050c8]">简</span>
    </div>
  );
}

// small hierarchy glyph above the site mark
function CornerMark() {
  return (
    <svg width="14" height="12" viewBox="0 0 14 12" className="absolute right-[28px] bottom-[56px]" aria-hidden>
      <rect width="14" height="12" fill="#fff" />
      <path d="M2 2.500h6v4H2zM8 4h4M12 1v8M5 7v3h5" fill="none" stroke="#000080" strokeWidth="1.500" />
    </svg>
  );
}

function SiteMark() {
  return (
    <div className="absolute right-[8px] bottom-0 text-center text-[#10407c] [-webkit-text-stroke:4px_white] [paint-order:stroke_fill]">
      <p className="font-['Noto_Sans_CJK_SC',sans-serif] text-[32px] leading-[38px] font-black">矿石收音机</p>
      <a href="#site" className="block font-['Lato',sans-serif] text-[17px] leading-[26px] font-black">
        www.crystalradio.cn
      </a>
    </div>
  );
}

export default function App() {
  return (
    <div className="relative flex h-screen flex-col overflow-hidden bg-[#ece9d8] text-black">
      <TitleBar />
      <MenuBar />
      <StandardBar />
      <ComponentBar />
      <main className="flex min-h-0 flex-1">
        <div className="flex min-w-0 flex-1 border-t border-[#716f64] pt-[3px] pr-[5px] pb-[7px] pl-1">
          <div className="flex min-w-0 flex-1 overflow-hidden border-t border-[#716f64]">
            <div className="w-[91px] shrink-0 bg-linear-to-r from-[#808080] from-86% to-[#555]" />
            <div className="min-w-0 flex-1 overflow-hidden bg-white">
              <Sheet />
            </div>
            <div className="w-[19px] shrink-0 bg-linear-to-r from-[#4c4c4c] to-[#808080]" />
            <VScroll />
          </div>
        </div>
        <InstrumentBar />
      </main>
      <SheetTabs />
      <StatusBar />
      <TaskBar />
      <DistortionAnalyzer />
      <Oscilloscope />
      <SpeedBall />
      <LanguageBar />
      <CornerMark />
      <SiteMark />
    </div>
  );
}
